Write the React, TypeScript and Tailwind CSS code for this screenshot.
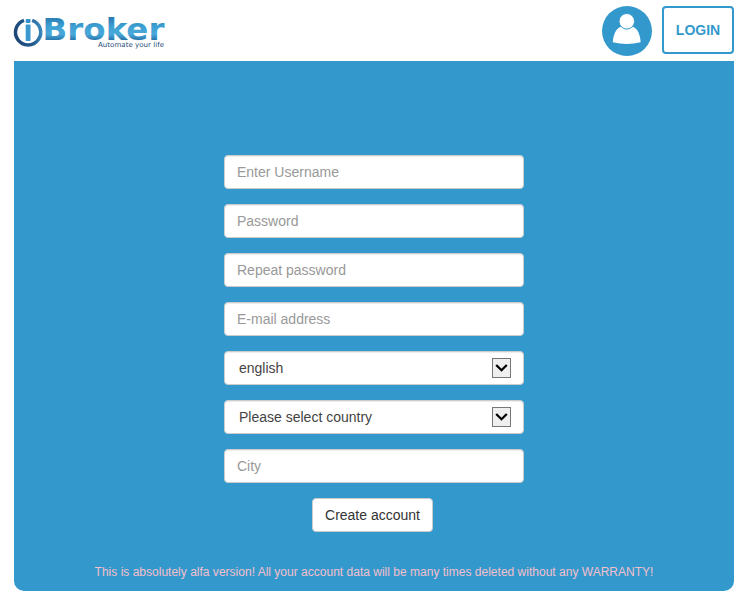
import React from "react";

function Logo() {
  return (
    <svg width="156" height="40" viewBox="12 12 156 40" className="block" role="img" aria-label="ioBroker">
      <defs>
        <linearGradient id="ring" x1="0" y1="0.6" x2="1" y2="0.4">
          <stop offset="0" stopColor="#1c4778" />
          <stop offset="0.6" stopColor="#245a8c" />
          <stop offset="1" stopColor="#3685ba" />
        </linearGradient>
        <linearGradient id="word" gradientUnits="userSpaceOnUse" x1="0" y1="17" x2="0" y2="40">
          <stop offset="0" stopColor="#2779b0" />
          <stop offset="0.4" stopColor="#3d9fd2" />
          <stop offset="0.75" stopColor="#4aa9da" />
          <stop offset="1" stopColor="#2775ab" />
        </linearGradient>
      </defs>
      <path d="M24 20.4 A12.6 12.6 0 1 0 32.2 20.4" fill="none" stroke="url(#ring)" strokeWidth="3.5" />
      <rect x="25.7" y="19" width="4.8" height="3.9" rx="0.8" fill="#3591c7" />
      <rect x="25.7" y="24.4" width="4.8" height="16.6" rx="0.8" fill="#3999ce" />
      <text
        x="42.6"
        y="39.8"
        textLength="121.8"
        lengthAdjust="spacingAndGlyphs"
        fill="url(#word)"
        className="text-[30.5px] font-bold [font-family:'DejaVu_Sans',sans-serif]"
      >
        Broker
      </text>
      <text
        x="98"
        y="46.6"
        textLength="66"
        lengthAdjust="spacingAndGlyphs"
        fill="#1f4c7a"
        className="text-[6.8px] [font-family:'DejaVu_Sans',sans-serif]"
      >
        Automate your life
      </text>
    </svg>
  );
}

function Avatar() {
  return (
    <svg width="50" height="50" viewBox="0 0 50 50" className="block">
      <circle cx="25" cy="25" r="25" fill="#3399cc" />
      <path
        d="M10.8 36.2 C11 29.5 14 22.5 18.6 20.8 H31 C35.6 22.5 38.4 29.5 38.6 36.2 Q31.5 38 24.7 38 Q17.8 38 10.8 36.2Z"
        fill="#fff"
      />
      <circle cx="24.8" cy="15.3" r="7.8" fill="#fff" stroke="#3399cc" strokeWidth="1" />
    </svg>
  );
}

const fieldBox =
  "h-[34px] w-[300px] rounded-[4px] border border-[#ccc] bg-white text-[14px] leading-5 shadow-[inset_0_1px_1px_rgba(0,0,0,0.075)]";

function Field({ placeholder, type = "text" }: { placeholder: string; type?: string }) {
  return (
    <input
      type={type}
      placeholder={placeholder}
      className={`${fieldBox} block px-3 py-1.5 text-[#555] outline-none placeholder:text-[#999]`}
    />
  );
}

function SelectField({ value }: { value: string }) {
  return (
    <div className={`${fieldBox} flex items-center justify-between pr-3 pl-[14px] text-[#444]`}>
      <span>{value}</span>
      <span className="flex h-5 w-[19px] items-center justify-center border border-[#777] bg-[#efefef]">
        <svg width="13" height="10" viewBox="0 0 13 10">
          <path d="M1.2 2 L6.5 7.2 L11.8 2" fill="none" stroke="#000" strokeWidth="2.3" />
        </svg>
      </span>
    </div>
  );
}

export default function App() {
  return (
    <div className="h-[597px] w-[745px] overflow-hidden bg-white pr-[11px] pl-[14px] [font-family:'Liberation_Sans',Arial,sans-serif]">
      <header className="flex h-[61px] items-start justify-between pt-[6px]">
        <div className="-ml-[2px] pt-[6px]">
          <Logo />
        </div>
        <div className="flex gap-[10px]">
          <Avatar />
          <button className="h-12 w-[72px] rounded-[4px] border-2 border-[#3399cc] text-[14px] font-bold text-[#3399cc]">
            LOGIN
          </button>
        </div>
      </header>
      <main className="flex h-[530px] flex-col items-center rounded-b-[10px] bg-[#3399cc] pt-[94px]">
        <form className="flex flex-col items-center gap-[15px]">
          <Field placeholder="Enter Username" />
          <Field placeholder="Password" type="password" />
          <Field placeholder="Repeat password" type="password" />
          <Field placeholder="E-mail address" type="email" />
          <SelectField value="english" />
          <SelectField value="Please select country" />
          <Field placeholder="City" />
          <button
            type="button"
            className="mr-[3px] h-[34px] w-[121px] rounded-[4px] border border-[#ccc] bg-white text-[14px] leading-5 whitespace-nowrap text-[#333]"
          >
            Create account
          </button>
        </form>
        <p className="mt-8 text-[12px] leading-4 tracking-[0.01px] text-[#f3bfcb]">
          This is absolutely alfa version! All your account data will be many times deleted without any WARRANTY!
        </p>
      </main>
    </div>
  );
}
